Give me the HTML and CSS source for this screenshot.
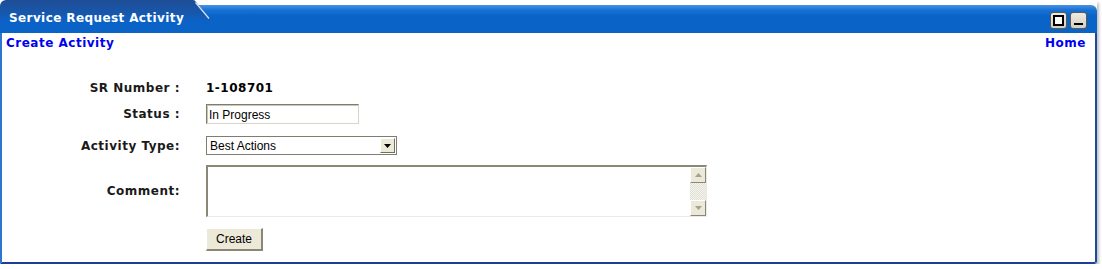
FILE: index.html
```html
<!DOCTYPE html>
<html>
<head>
<meta charset="utf-8">
<title>Service Request Activity</title>
<link rel="stylesheet" href="styles.css">
</head>
<body>
<div class="portlet">
  <div class="header">
    <div class="tab">Service Request Activity</div>
    <svg class="slant" width="20" height="33" viewBox="0 0 20 33">
      <defs>
        <linearGradient id="tabg" x1="0" y1="0" x2="0" y2="33" gradientUnits="userSpaceOnUse">
          <stop offset="0" stop-color="#1f4d96"/>
          <stop offset="0.4" stop-color="#1757ad"/>
          <stop offset="0.65" stop-color="#0b62c6"/>
          <stop offset="1" stop-color="#0a64c8"/>
        </linearGradient>
        <linearGradient id="barg" x1="0" y1="5" x2="0" y2="33" gradientUnits="userSpaceOnUse">
          <stop offset="0" stop-color="#4b93e4"/>
          <stop offset="0.18" stop-color="#1872d3"/>
          <stop offset="0.4" stop-color="#0a64c8"/>
          <stop offset="1" stop-color="#0a64c8"/>
        </linearGradient>
      </defs>
      <rect x="0" y="5" width="20" height="28" fill="url(#barg)"/>
      <path d="M0 0 H3 Q5 0 6 2 L20 19 V33 H0 Z" fill="url(#tabg)"/>
      <path d="M5.5 2.5 L19 18.5" stroke="#d8e6f8" stroke-width="1.2"/>
    </svg>
    <div class="bar">
      <span class="hbtn"><span class="ico-max"></span></span>
      <span class="hbtn"><span class="ico-min"></span></span>
    </div>
  </div>
  <div class="content">
    <div class="links">
      <a class="link" href="#">Create Activity</a>
      <a class="link" href="#">Home</a>
    </div>
    <form class="form">
      <div class="row r1">
        <label class="lbl">SR Number :</label>
        <span class="val">1-108701</span>
      </div>
      <div class="row r2">
        <label class="lbl">Status :</label>
        <input class="text" type="text" value="In Progress">
      </div>
      <div class="row r3">
        <label class="lbl">Activity Type:</label>
        <div class="select">
          <select class="sel"><option>Best Actions</option></select>
          <span class="ddbtn"><svg width="7" height="4" viewBox="0 0 7 4"><path d="M0 0 H7 L3.5 4 Z" fill="#000"/></svg></span>
        </div>
      </div>
      <div class="row r4">
        <label class="lbl">Comment:</label>
        <div class="tawrap">
          <textarea class="ta"></textarea>
          <div class="scroll">
            <span class="sbtn"><svg width="7" height="4" viewBox="0 0 7 4"><path d="M0 4 H7 L3.5 0 Z" fill="#a5a293"/></svg></span>
            <span class="track"></span>
            <span class="sbtn"><svg width="7" height="4" viewBox="0 0 7 4"><path d="M0 0 H7 L3.5 4 Z" fill="#a5a293"/></svg></span>
          </div>
        </div>
      </div>
      <div class="row r5">
        <span class="lbl"></span>
        <button class="btn" type="button">Create</button>
      </div>
    </form>
  </div>
</div>
</body>
</html>
```

FILE: styles.css
```css
html, body {
  margin: 0;
  padding: 0;
  background: #fff;
}

.portlet {
  width: 1097px;
  box-shadow: 2px 3px 3px rgba(0, 0, 0, 0.25);
  border-bottom-right-radius: 3px;
}

.header {
  display: flex;
  align-items: flex-end;
  height: 33px;
  background: #fff;
}

.tab {
  width: 190px;
  height: 33px;
  box-sizing: border-box;
  padding: 2px 0 0 9px;
  border-top-left-radius: 6px;
  background: linear-gradient(to bottom, #1f4d96 0%, #1757ad 40%, #0b62c6 65%, #0a64c8 100%);
  color: #fff;
  font: bold 12px "DejaVu Sans", Verdana, sans-serif;
  letter-spacing: 0.4px;
  display: flex;
  align-items: center;
  white-space: nowrap;
}

.slant {
  display: block;
  flex: none;
}

.bar {
  flex: 1;
  height: 28px;
  box-sizing: border-box;
  border-top-right-radius: 6px;
  background: linear-gradient(to bottom, #4b93e4 0, #1872d3 5px, #0a64c8 11px, #0a64c8 100%);
  display: flex;
  justify-content: flex-end;
  align-items: flex-start;
  gap: 3px;
  padding: 7px 10px 0 0;
}

.hbtn {
  width: 17px;
  height: 17px;
  box-sizing: border-box;
  border: 1px solid #5e5b52;
  border-radius: 3px;
  background: linear-gradient(to bottom, #eeebe2, #d3cfc2);
  position: relative;
  display: block;
}

.ico-max {
  position: absolute;
  left: 2px;
  top: 2px;
  width: 11px;
  height: 11px;
  box-sizing: border-box;
  border: 2px solid #000;
  background: #fff;
}

.ico-min {
  position: absolute;
  left: 3px;
  top: 10px;
  width: 9px;
  height: 2px;
  background: #000;
}

.content {
  background: #fff;
  border-left: 2px solid #2f75d0;
  border-right: 2px solid #1a4aa0;
  border-bottom: 2px solid #1a3f96;
  border-bottom-right-radius: 3px;
  padding: 3px 9px 11px 4px;
}

.links {
  display: flex;
  justify-content: space-between;
  line-height: 16px;
  height: 16px;
}

.link {
  font: bold 12px "DejaVu Sans", Verdana, sans-serif;
  letter-spacing: 0.5px;
  color: #0000f0;
  text-decoration: none;
}

.form {
  margin: 28px 0 0 0;
}

.row {
  display: flex;
  align-items: center;
}

.r1 { height: 16px; }
.r2 { margin-top: 8px; }
.r3 { margin-top: 12px; }
.r4 { margin-top: 10px; }
.r5 { margin-top: 11px; }

.lbl {
  width: 174px;
  margin-right: 26px;
  text-align: right;
  font: bold 12px "DejaVu Sans", Verdana, sans-serif;
  letter-spacing: 0.5px;
  color: #1a1a1a;
  flex: none;
}

.val {
  font: bold 12px "DejaVu Sans", Verdana, sans-serif;
  letter-spacing: 0.5px;
  color: #000;
}

.text {
  width: 153px;
  height: 20px;
  box-sizing: border-box;
  margin: 0;
  padding: 1px 2px 0 2px;
  border-style: solid;
  border-width: 1px;
  border-color: #7f7d6e #d8d5c8 #d8d5c8 #7f7d6e;
  box-shadow: inset 1px 1px 0 #c9c6b8;
  font: 12px "Liberation Sans", Arial, sans-serif;
  color: #000;
  background: #fff;
  outline: none;
}

.select {
  width: 191px;
  height: 19px;
  box-sizing: border-box;
  border: 1px solid #7f7d6e;
  display: flex;
  background: #fff;
}

.sel {
  flex: 1;
  min-width: 0;
  appearance: none;
  -webkit-appearance: none;
  border: none;
  outline: none;
  background: transparent;
  margin: 0;
  padding: 0 0 0 3px;
  font: 12px "Liberation Sans", Arial, sans-serif;
  color: #000;
  height: 17px;
}

.ddbtn {
  width: 15px;
  height: 15px;
  margin: 1px 1px 1px 0;
  box-sizing: border-box;
  background: #ece9d8;
  border-style: solid;
  border-width: 1px;
  border-color: #fff #716f64 #716f64 #fff;
  display: flex;
  align-items: center;
  justify-content: center;
}

.tawrap {
  width: 501px;
  height: 52px;
  box-sizing: border-box;
  border-style: solid;
  border-width: 2px 1px 1px 2px;
  border-color: #8b8878 #ecebe2 #ecebe2 #8b8878;
  display: flex;
  background: #fff;
}

.ta {
  flex: 1;
  border: none;
  outline: none;
  resize: none;
  margin: 0;
  padding: 2px;
  overflow: hidden;
  font: 12px "Liberation Sans", Arial, sans-serif;
}

.scroll {
  width: 16px;
  display: flex;
  flex-direction: column;
}

.sbtn {
  height: 16px;
  box-sizing: border-box;
  background: #ece9d8;
  border-style: solid;
  border-width: 1px;
  border-color: #fff #8a8778 #8a8778 #fff;
  display: flex;
  align-items: center;
  justify-content: center;
  flex: none;
}

.track {
  flex: 1;
  background-color: #fff;
  background-image: repeating-conic-gradient(#f4f3ee 0 25%, #e2e0d4 0 50%);
  background-size: 2px 2px;
}

.btn {
  width: 57px;
  height: 23px;
  box-sizing: border-box;
  margin: 0;
  padding: 0;
  background: #ece9d8;
  border-style: solid;
  border-width: 1px 2px 2px 1px;
  border-color: #fff #8a8778 #8a8778 #fff;
  font: 12px "Liberation Sans", Arial, sans-serif;
  color: #000;
}
```
